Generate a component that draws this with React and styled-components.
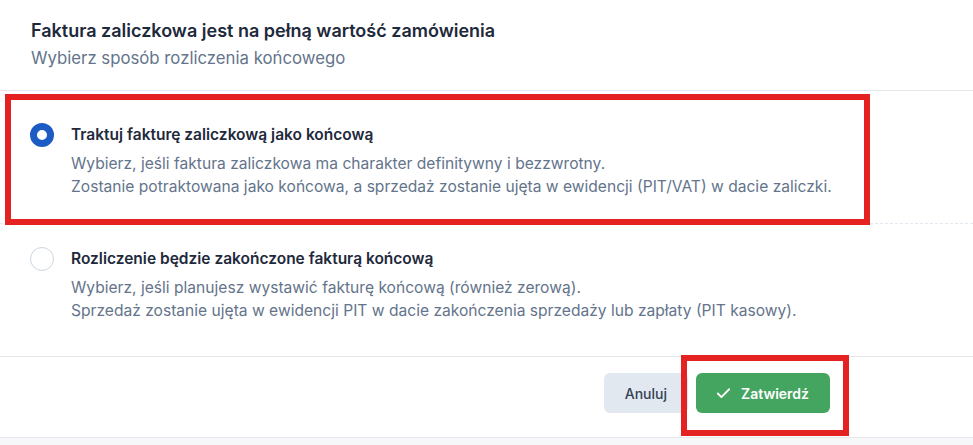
import styled, { createGlobalStyle } from 'styled-components';
import { Check } from 'lucide-react';

const GlobalStyle = createGlobalStyle`
  body {
    margin: 0;
    background: #f6f7f9;
    font-family: Inter, "Noto Sans", sans-serif;
  }
`;

const options = [
  {
    id: 'final',
    title: 'Traktuj fakturę zaliczkową jako końcową',
    lines: [
      'Wybierz, jeśli faktura zaliczkowa ma charakter definitywny i bezzwrotny.',
      'Zostanie potraktowana jako końcowa, a sprzedaż zostanie ujęta w ewidencji (PIT/VAT) w dacie zaliczki.',
    ],
  },
  {
    id: 'closing',
    title: 'Rozliczenie będzie zakończone fakturą końcową',
    lines: [
      'Wybierz, jeśli planujesz wystawić fakturę końcową (również zerową).',
      'Sprzedaż zostanie ujęta w ewidencji PIT w dacie zakończenia sprzedaży lub zapłaty (PIT kasowy).',
    ],
  },
];

export default function App() {
  const selected = 'final';
  return (
    <>
      <GlobalStyle />
      <Card>
        <Header>
          <Title>Faktura zaliczkowa jest na pełną wartość zamówienia</Title>
          <Subtitle>Wybierz sposób rozliczenia końcowego</Subtitle>
        </Header>
        <OptionList>
          {options.map((o) => (
            <Option key={o.id}>
              <Radio $checked={o.id === selected} />
              <OptionText>
                <OptionTitle>{o.title}</OptionTitle>
                <OptionDesc>
                  {o.lines.map((l) => (
                    <div key={l}>{l}</div>
                  ))}
                </OptionDesc>
              </OptionText>
              {o.id === selected && <OptionMark />}
            </Option>
          ))}
        </OptionList>
        <Footer>
          <CancelButton>Anuluj</CancelButton>
          <ConfirmButton>
            <Check size={17} strokeWidth={2.6} />
            Zatwierdź
            <ButtonMark />
          </ConfirmButton>
        </Footer>
      </Card>
    </>
  );
}

const Card = styled.div`
  background: #ffffff;
  border-bottom: 1px solid #e6e8ec;
`;

const Header = styled.div`
  padding: 19px 31px 20px;
  border-bottom: 1px solid #e5e7eb;
`;

const Title = styled.div`
  font-size: 18px;
  line-height: 24px;
  font-weight: 600;
  color: #1e293b;
`;

const Subtitle = styled.div`
  margin-top: 3px;
  font-size: 16.75px;
  line-height: 24px;
  color: #64748b;
`;

const OptionList = styled.div`
  padding: 9px 0 8px;
`;

const Option = styled.div`
  position: relative;
  display: flex;
  align-items: flex-start;
  gap: 17px;
  height: 124px;
  box-sizing: border-box;
  padding: 24px 24px 0 30px;
  &:not(:last-child) {
    border-bottom: 1px dashed #e2e8f0;
  }
`;

const Radio = styled.span`
  flex: none;
  width: 24px;
  height: 24px;
  margin-top: -1px;
  box-sizing: border-box;
  border-radius: 50%;
  background: #ffffff;
  border: ${({ $checked }) => ($checked ? '7px solid #1d5bc4' : '1px solid #cbd5e1')};
`;

const OptionText = styled.div`
  display: flex;
  flex-direction: column;
`;

const OptionTitle = styled.div`
  font-size: 15.5px;
  line-height: 22px;
  font-weight: 600;
  color: #1e293b;
`;

const OptionDesc = styled.div`
  margin-top: 6px;
  font-size: 15.6px;
  line-height: 23px;
  color: #64748b;
`;

const OptionMark = styled.span`
  position: absolute;
  left: 5px;
  top: -6px;
  width: 865px;
  height: 131px;
  box-sizing: border-box;
  border: 6px solid #e52222;
  pointer-events: none;
`;

const Footer = styled.div`
  display: flex;
  justify-content: flex-end;
  gap: 8px;
  padding: 16px 143px 24px 0;
  border-top: 1px solid #e5e7eb;
`;

const BaseButton = styled.button`
  height: 40px;
  border: 0;
  border-radius: 6px;
  font-family: Inter, "Noto Sans", sans-serif;
  font-size: 14px;
  display: flex;
  align-items: center;
  cursor: pointer;
`;

const CancelButton = styled(BaseButton)`
  padding: 0 21px;
  background: #e2e8f0;
  color: #334155;
  font-weight: 500;
`;

const ConfirmButton = styled(BaseButton)`
  position: relative;
  gap: 9px;
  padding: 0 21px 0 19px;
  background: #44a560;
  color: #ffffff;
  font-weight: 600;
`;

const ButtonMark = styled.span`
  position: absolute;
  left: -15px;
  top: -18px;
  width: 168px;
  height: 81px;
  box-sizing: border-box;
  border: 6px solid #e52222;
  pointer-events: none;
`;
